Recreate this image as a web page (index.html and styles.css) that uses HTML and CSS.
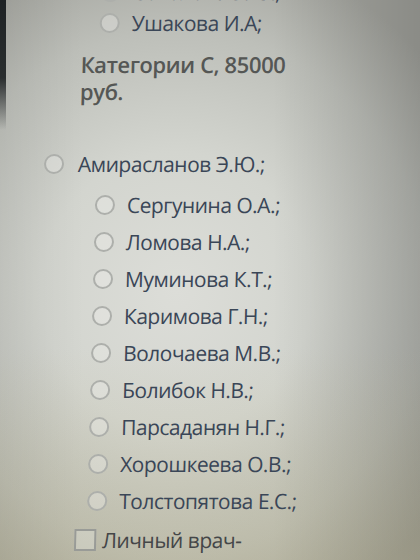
FILE: index.html
```html
<!DOCTYPE html>
<html lang="ru">
<head>
<meta charset="utf-8">
<link rel="stylesheet" href="styles.css">
</head>
<body>
<div class="screen">
  <div class="bezel"></div>
  <div class="content">
    <div class="row sub cut"><span class="radio"></span><span class="label">Соколова Э.Ю.;</span></div>
    <div class="row sub"><span class="radio"></span><span class="label">Ушакова И.А;</span></div>
    <div class="category">Категории С, 85000<br>руб.</div>
    <div class="row top"><span class="radio"></span><span class="label">Амирасланов Э.Ю.;</span></div>
    <div class="sublist">
      <div class="row sub"><span class="radio"></span><span class="label">Сергунина О.А.;</span></div>
      <div class="row sub"><span class="radio"></span><span class="label">Ломова Н.А.;</span></div>
      <div class="row sub"><span class="radio"></span><span class="label">Муминова К.Т.;</span></div>
      <div class="row sub"><span class="radio"></span><span class="label">Каримова Г.Н.;</span></div>
      <div class="row sub"><span class="radio"></span><span class="label">Волочаева М.В.;</span></div>
      <div class="row sub"><span class="radio"></span><span class="label">Болибок Н.В.;</span></div>
      <div class="row sub"><span class="radio"></span><span class="label">Парсаданян Н.Г.;</span></div>
      <div class="row sub"><span class="radio"></span><span class="label">Хорошкеева О.В.;</span></div>
      <div class="row sub"><span class="radio"></span><span class="label">Толстопятова Е.С.;</span></div>
    </div>
    <div class="row check"><span class="box"></span><span class="label">Личный врач-</span></div>
  </div>
</div>
</body>
</html>
```
FILE: styles.css
```css
html, body {
  margin: 0;
  padding: 0;
}
body {
  width: 420px;
  height: 560px;
  overflow: hidden;
  font-family: "Open Sans", "Noto Sans", sans-serif;
}
.screen {
  position: relative;
  width: 420px;
  height: 560px;
  overflow: hidden;
  background:
    linear-gradient(to bottom, rgba(0,0,0,0) 62%, rgba(190,180,130,0.28) 100%),
    linear-gradient(to right, rgba(0,0,0,0.06) 0%, rgba(0,0,0,0) 20%, rgba(0,0,0,0) 65%, rgba(0,0,0,0.16) 100%),
    radial-gradient(ellipse 80% 62% at 42% 52%, #dcddd8 0%, #d3d5cf 40%, #bdbfb9 75%, #a5a6a0 100%);
}
.bezel {
  position: absolute;
  left: 0;
  top: 0;
  width: 6px;
  height: 130px;
  background: linear-gradient(to bottom, #1e2224 0%, #2a2e2f 60%, rgba(60,64,64,0) 100%);
}
.content {
  display: flex;
  flex-direction: column;
  transform: skewX(-1.5deg);
  transform-origin: 0 280px;
  color: #3a4657;
}
.row {
  display: flex;
  align-items: center;
  height: 37px;
  font-size: 21px;
  letter-spacing: -0.5px;
}
.radio {
  box-sizing: border-box;
  width: 20px;
  height: 20px;
  border-radius: 50%;
  border: 2px solid #adafab;
  background: rgba(240,241,238,0.35);
  flex: none;
}
.sub {
  padding-left: 93px;
}
.sub .radio {
  margin-right: 12px;
}
.cut {
  height: 24px;
  margin-top: -20px;
}
.category {
  margin: 10px 0 0 75px;
  font-size: 22px;
  line-height: 27px;
  font-weight: 600;
  color: #555755;
  letter-spacing: -0.4px;
  height: 88px;
}
.top {
  padding-left: 41px;
  margin-top: 6px;
}
.top .radio {
  margin-right: 14px;
}
.sublist {
  display: flex;
  flex-direction: column;
  margin-top: 4px;
}
.check {
  padding-left: 81px;
  margin-top: 2px;
}
.box {
  box-sizing: border-box;
  width: 22px;
  height: 22px;
  border: 2px solid #999b97;
  background: rgba(240,241,238,0.3);
  margin-right: 6px;
  flex: none;
}
.check .label {
  color: #444648;
}
```
